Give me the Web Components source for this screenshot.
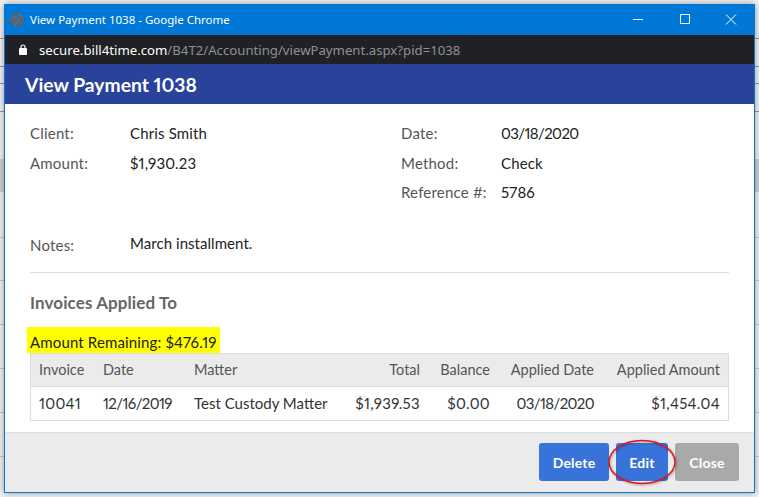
<!DOCTYPE html>
<html><head><meta charset="utf-8"><style>
html,body{margin:0;height:497px;overflow:hidden;font-family:Lato,"Liberation Sans",sans-serif;font-variant-numeric:proportional-nums}
body{background:
linear-gradient(#d2d2d2,#d2d2d2) 0 159px/100% 33px no-repeat,
linear-gradient(#ccc,#ccc) 0 237px/100% 1px no-repeat,
linear-gradient(#ccc,#ccc) 0 280px/100% 1px no-repeat,
linear-gradient(#ccc,#ccc) 0 324px/100% 1px no-repeat,
linear-gradient(#ccc,#ccc) 0 368px/100% 1px no-repeat,
linear-gradient(#ccc,#ccc) 0 412px/100% 1px no-repeat,
linear-gradient(#ccc,#ccc) 0 456px/100% 1px no-repeat,
linear-gradient(#999,#999) 0 38px/100% 1px no-repeat,
linear-gradient(#999,#999) 0 66px/100% 1px no-repeat,
linear-gradient(#999,#999) 0 83px/100% 1px no-repeat,
linear-gradient(#999,#999) 0 111px/100% 1px no-repeat,
#f3f3f3}
</style></head><body>
<browser-window>
<span slot="title">View Payment 1038 - Google Chrome</span>
<span slot="host">secure.bill4time.com</span>
<span slot="path">/B4T2/Accounting/viewPayment.aspx?pid=1038</span>
<payment-view></payment-view>
</browser-window>
<script>
class BrowserWindow extends HTMLElement{constructor(){super();this.attachShadow({mode:'open'}).innerHTML=`<style>
:host{display:flex;flex-direction:column;box-sizing:border-box;width:751px;height:489px;margin:4px 0 0 4px;border:1px solid #0078d7;border-top:0;box-shadow:0 0 7px rgba(0,0,0,.4);background:#fff}
.title{height:31px;flex:none;background:#0078d7;color:#fff;display:flex;align-items:center;font:11.500px "Noto Sans","Open Sans",sans-serif}
.globe{width:14px;height:14px;margin:0 6px 0 5px;flex:none}
.t{flex:1}
.ctrl{display:flex;width:138px;flex:none}
.ctrl svg{width:46px;height:31px;display:block}
.addr{height:29px;flex:none;background:#202124;display:flex;align-items:center;font:13.200px "Noto Sans","Open Sans",sans-serif;color:#8f9194}
.addr svg{margin:0 12px 0 14px;flex:none}
.host{color:#fff}
</style>
<div class="title"><svg class="globe" viewBox="0 0 14 14"><circle cx="7" cy="7" r="7" fill="#5f6368"/><path d="M1.500 5.500C4 3.500 6 4 7.500 5.500S10 8.500 7.500 9.500 5 11 5.500 13.500M9 1c.5 1.500 2 2.500 4 2.500" fill="none" stroke="#2f7fc4" stroke-width="1.300"/></svg><span class="t"><slot name="title"></slot></span>
<div class="ctrl"><svg viewBox="0 0 46 31"><path d="M17 15.500h10" stroke="#fff"/></svg><svg viewBox="0 0 46 31"><rect x="18.500" y="10.500" width="9" height="9" fill="none" stroke="#fff"/></svg><svg viewBox="0 0 46 31"><path d="M18 10.500l10 10M28 10.500L18 20.500" stroke="#fff" fill="none"/></svg></div></div>
<div class="addr"><svg width="8" height="11" viewBox="0 0 8 11"><path d="M2 4.500V3a2 2 0 0 1 4 0v1.500" fill="none" stroke="#fff" stroke-width="1.200"/><rect y="4" width="8" height="7" rx="1" fill="#fff"/></svg><span class="host"><slot name="host"></slot></span><slot name="path"></slot></div>
<slot></slot>`}}
customElements.define('browser-window',BrowserWindow);

class InfoRow extends HTMLElement{constructor(){super();this.attachShadow({mode:'open'}).innerHTML=`<style>
:host{display:flex;font-size:15px;line-height:18px;height:var(--h,30px)}
.l{color:#555;width:var(--lw,100px);flex:none;letter-spacing:.2px}
.v{color:#222;letter-spacing:var(--ls,.15px)}
</style><span class="l"><slot name="l"></slot></span><span class="v"><slot></slot></span>`}}
customElements.define('info-row',InfoRow);

class ActionButton extends HTMLElement{constructor(){super();this.attachShadow({mode:'open'}).innerHTML=`<style>
:host{display:flex;align-items:center;justify-content:center;height:38px;border-radius:3px;background:var(--bg,#3873d9);color:#fff;font-weight:700;font-size:14px;width:var(--w,70px);letter-spacing:.2px}
</style><slot></slot>`}}
customElements.define('action-button',ActionButton);

class InvoiceTable extends HTMLElement{constructor(){super();this.attachShadow({mode:'open'}).innerHTML=`<style>
:host{display:block;border:1px solid #ddd;font-size:15px;color:#333;letter-spacing:.3px}
.r{display:grid;grid-template-columns:64px 91px 1fr 90px 70px 104px 126px;align-items:center;box-sizing:border-box;padding-bottom:2px}
.h{background:#ebebeb;height:33px;border-bottom:1px solid #ddd;color:#555;font-size:14.500px;letter-spacing:0}
.b{height:33px}
span{padding:0 0 0 8px;white-space:nowrap}
.n{text-align:right;padding:0 8px 0 0}
.d{letter-spacing:-.6px}
.m{letter-spacing:0}
</style>
<div class="r h"><span>Invoice</span><span>Date</span><span>Matter</span><span class="n">Total</span><span class="n">Balance</span><span class="n">Applied Date</span><span class="n">Applied Amount</span></div>
<div class="r b"><span>10041</span><span class="d">12/16/2019</span><span class="m">Test Custody Matter</span><span class="n">$1,939.53</span><span class="n">$0.00</span><span class="n d">03/18/2020</span><span class="n">$1,454.04</span></div>`}}
customElements.define('invoice-table',InvoiceTable);

class PaymentView extends HTMLElement{constructor(){super();this.attachShadow({mode:'open'}).innerHTML=`<style>
:host{display:flex;flex-direction:column;flex:1;min-height:0}
header{height:40px;flex:none;background:#29439b;color:#fff;font-weight:700;font-size:19.300px;display:flex;align-items:center;padding-left:20px}
main{flex:1;padding:20px 25px 0}
.cols{display:grid;grid-template-columns:371px 1fr;height:89px}
.notes{margin-top:21px;height:38px;border-bottom:1px solid #ddd;display:flex;font-size:15px;line-height:18px;letter-spacing:.05px}
.notes .l{width:100px;color:#555;padding-top:2px;letter-spacing:.2px}.notes .v{color:#222}
h2{margin:21px 0 0;font-size:17px;line-height:18px;font-weight:700;color:#666;letter-spacing:.1px}
.hl{display:block;width:max-content;background:#ff0;margin:15px 0 0 -3px;padding:5px 3px 1px;font-size:15px;line-height:20px;color:#222;letter-spacing:.15px;height:20px}
footer{height:60px;flex:none;background:#ebebeb;border-top:1px solid #ddd;box-sizing:border-box;display:flex;align-items:flex-start;justify-content:flex-end;gap:7px;padding:10px 15px 0 0}
.wrap{position:relative;display:flex}
.oval{position:absolute;left:-8px;top:-5px;pointer-events:none;overflow:visible;filter:drop-shadow(1px 1px 1px rgba(0,0,0,.35))}
</style>
<header>View Payment 1038</header>
<main>
<div class="cols">
<div><info-row><span slot="l">Client:</span>Chris Smith</info-row><info-row><span slot="l">Amount:</span>$1,930.23</info-row></div>
<div><info-row style="--ls:-.6px"><span slot="l" style="letter-spacing:.2px">Date:</span>03/18/2020</info-row><info-row style="--h:29px"><span slot="l">Method:</span>Check</info-row><info-row><span slot="l">Reference #:</span>5786</info-row></div>
</div>
<div class="notes"><span class="l">Notes:</span><span class="v">March installment.</span></div>
<h2>Invoices Applied To</h2>
<div class="hl">Amount Remaining: $476.19</div>
<invoice-table></invoice-table>
</main>
<footer><action-button>Delete</action-button><div class="wrap"><action-button style="--w:52px">Edit</action-button><svg class="oval" width="68" height="48"><ellipse cx="34" cy="24" rx="33" ry="21.500" fill="none" stroke="#e8101c" stroke-width="1.500"/></svg></div><action-button style="--bg:#a9a9a9;--w:64px">Close</action-button></footer>`}}
customElements.define('payment-view',PaymentView);
</script>
</body></html>
